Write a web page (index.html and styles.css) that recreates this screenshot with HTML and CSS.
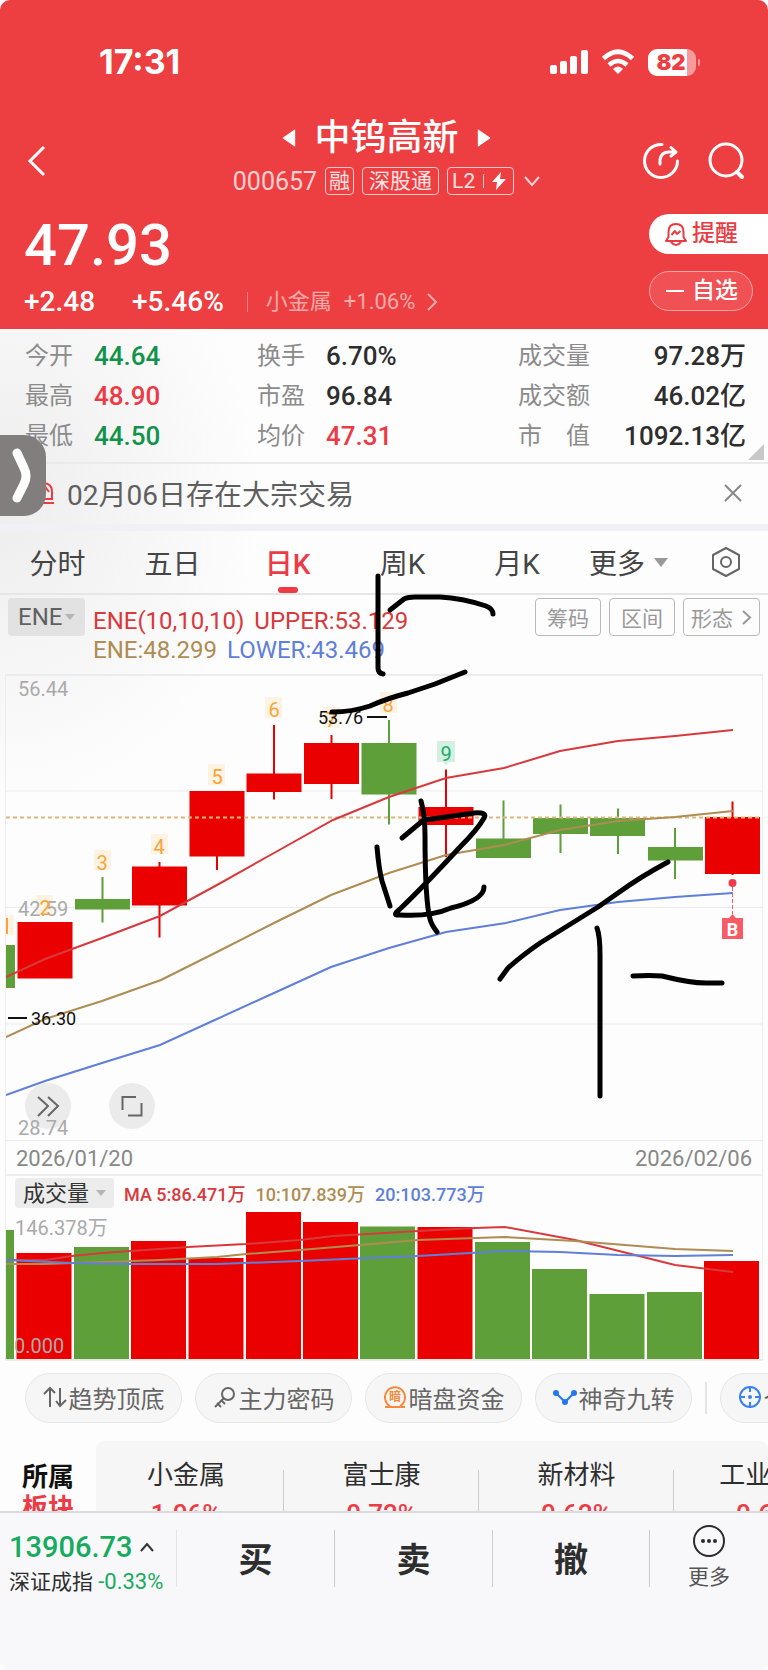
FILE: index.html
```
<!DOCTYPE html>
<html lang="zh-CN">
<head>
    <meta charset="UTF-8">
    <meta name="viewport" content="width=device-width, initial-scale=1.0">
    <title>中钨高新 000657</title>
    <link rel="stylesheet" href="styles.css">
</head>
<body>
    <header class="header">
        <div class="status">
            <span class="clock">17:31</span>
            <div class="status-icons">
                <svg width="38" height="26" viewBox="0 0 38 26" fill="#fff">
                    <rect x="0" y="16" width="7" height="9" rx="2"/>
                    <rect x="10" y="12" width="7" height="13" rx="2"/>
                    <rect x="20" y="7" width="7" height="18" rx="2"/>
                    <rect x="31" y="1" width="7" height="24" rx="2"/>
                </svg>
                <svg width="34" height="26" viewBox="0 0 34 26" fill="none" stroke="#fff" stroke-width="5">
                    <path d="M2.500 9.500 Q17 -4 31.500 9.500"/>
                    <path d="M8 16 Q17 8 26 16" stroke-width="4.500"/>
                    <path d="M17 25 L12 20 Q17 15 22 20 Z" fill="#fff" stroke="none"/>
                </svg>
                <div class="battery"><span>82</span></div>
            </div>
        </div>
        <nav class="nav">
            <button class="icon-button back" aria-label="返回">
                <svg width="20" height="32" viewBox="0 0 20 32"><path d="M17 2 L3 16 L17 30" fill="none" stroke="#fff" stroke-width="3"/></svg>
            </button>
            <div class="stock">
                <div class="stock-name">
                    <button class="icon-button" aria-label="上一只"><svg width="14" height="18" viewBox="0 0 12 16"><path d="M11 1 V15 L1 8 Z" fill="#fff" stroke="#fff" stroke-linejoin="round"/></svg></button>
                    <h1>中钨高新</h1>
                    <button class="icon-button" aria-label="下一只"><svg width="14" height="18" viewBox="0 0 12 16"><path d="M1 1 V15 L11 8 Z" fill="#fff" stroke="#fff" stroke-linejoin="round"/></svg></button>
                </div>
                <div class="stock-tags">
                    <span class="code">000657</span>
                    <span class="tag">融</span>
                    <span class="tag tag-wide">深股通</span>
                    <span class="tag tag-l2">L2<i></i><svg width="14" height="18" viewBox="0 0 14 18"><path d="M9 0 L0 10 H5 L4 18 L14 7 H8 Z" fill="#fff"/></svg></span>
                    <svg class="more-arrow" width="16" height="11" viewBox="0 0 16 11"><path d="M1 1 L8 9 L15 1" fill="none" stroke="#ffd5d5" stroke-width="2"/></svg>
                </div>
            </div>
            <div class="nav-actions">
                <button class="icon-button" aria-label="分享">
                    <svg width="38" height="38" viewBox="0 0 38 38" fill="none" stroke="#fff" stroke-width="3" stroke-linecap="round" stroke-linejoin="round">
                        <path d="M20 2.500 A16.500 16.500 0 1 0 35.500 19"/>
                        <path d="M18 22 V18 Q19 10 27 10 H33 M29 5.500 L34 10 L29 14"/>
                    </svg>
                </button>
                <button class="icon-button" aria-label="搜索">
                    <svg width="38" height="38" viewBox="0 0 38 38" fill="none" stroke="#fff" stroke-width="3" stroke-linecap="round">
                        <circle cx="18" cy="18" r="16"/>
                        <path d="M29 30 L34 35" stroke-width="4"/>
                    </svg>
                </button>
            </div>
        </nav>
        <div class="quote">
            <div>
                <div class="price">47.93</div>
                <div class="change">
                    <span>+2.48</span>
                    <span class="percent">+5.46%</span>
                    <a class="sector" href="#">小金属 <b>+1.06%</b>
                        <svg width="11" height="18" viewBox="0 0 11 18"><path d="M1 1 L9 9 L1 17" fill="none" stroke="#f9aaaa" stroke-width="2"/></svg>
                    </a>
                </div>
            </div>
            <div class="quote-actions">
                <button class="remind">
                    <svg width="22" height="23" viewBox="0 0 22 23" fill="none" stroke="#e93b41" stroke-width="2" stroke-linejoin="round">
                        <path d="M1 18 L3.500 14 V9 Q3.500 1 11 1 Q18.500 1 18.500 9 V14 L21 18 Z"/>
                        <path d="M6 19 Q11 25 16 19 M6.500 12 L10 8 L12 11 L15.500 8"/>
                    </svg>
                    提醒
                </button>
                <button class="watch"><i></i>自选</button>
            </div>
        </div>
    </header>

    <section class="info">
        <dl class="stats">
            <div><dt>今开</dt><dd class="green">44.64</dd></div>
            <div><dt>换手</dt><dd>6.70%</dd></div>
            <div><dt>成交量</dt><dd>97.28万</dd></div>
            <div><dt>最高</dt><dd class="red">48.90</dd></div>
            <div><dt>市盈</dt><dd>96.84</dd></div>
            <div><dt>成交额</dt><dd>46.02亿</dd></div>
            <div><dt>最低</dt><dd class="green">44.50</dd></div>
            <div><dt>均价</dt><dd class="red">47.31</dd></div>
            <div><dt>市　值</dt><dd>1092.13亿</dd></div>
        </dl>
        <div class="notice">
            <svg width="26" height="26" viewBox="0 0 26 26" fill="none" stroke="#e93b41" stroke-width="2">
                <path d="M4 19 V12 Q4 3 13 3 Q22 3 22 12 V19 Z M2 23 H24 M12 13 L16 8 L19 12"/>
            </svg>
            <p>02月06日存在大宗交易</p>
            <button class="icon-button" aria-label="关闭">
                <svg width="18" height="18" viewBox="0 0 18 18"><path d="M1 1 L17 17 M17 1 L1 17" stroke="#888" stroke-width="2"/></svg>
            </button>
        </div>
        <button class="handle" aria-label="展开侧栏">
            <svg width="22" height="56" viewBox="0 0 22 56"><path d="M5 5 L12 20 Q16 28 12 36 L5 50" fill="none" stroke="#fff" stroke-width="9" stroke-linecap="round"/></svg>
        </button>
    </section>

    <main class="kline">
        <div class="tabs">
            <button>分时</button>
            <button>五日</button>
            <button class="active">日K</button>
            <button>周K</button>
            <button>月K</button>
            <button>更多<i class="caret"></i></button>
            <button aria-label="设置">
                <svg width="30" height="32" viewBox="0 0 30 32" fill="none" stroke="#666" stroke-width="2" stroke-linejoin="round">
                    <path d="M15 2 L28 9 V23 L15 30 L2 23 V9 Z"/>
                    <circle cx="15" cy="16" r="5"/>
                </svg>
            </button>
        </div>
        <div class="indicator">
            <label class="picker picker-ene">
                <select aria-label="主图指标"><option>ENE</option></select>
                <i class="caret"></i>
            </label>
            <div class="legend">
                <p><span class="c-red">ENE(10,10,10)</span><span class="c-red">UPPER:53.129</span></p>
                <p><span class="c-brown">ENE:48.299</span><span class="c-blue">LOWER:43.469</span></p>
            </div>
            <div class="tools">
                <button>筹码</button>
                <button>区间</button>
                <button>形态
                    <svg width="10" height="15" viewBox="0 0 10 15"><path d="M1 1 L8 7.500 L1 14" fill="none" stroke="#999" stroke-width="2"/></svg>
                </button>
            </div>
        </div>

        <div class="plots">
            <svg class="plot" viewBox="6 675 756 466">
                <g stroke="#ececec">
                    <path d="M6 675.500 H762 M6 791 H762 M6 907.500 H762 M6 1024 H762 M6 1140.500 H762"/>
                </g>
                <!-- candles -->
                <g fill="#eb0000" stroke="#eb0000" stroke-width="0">
                    <rect x="17.500" y="922" width="55" height="56.500"/>
                    <rect x="132" y="866.500" width="55" height="39"/>
                    <rect x="189.500" y="791" width="55" height="65.500"/>
                    <rect x="246.500" y="773.500" width="55" height="18.500"/>
                    <rect x="304" y="743" width="55" height="41"/>
                    <rect x="418.500" y="807" width="55" height="18"/>
                    <rect x="705" y="817" width="55" height="57"/>
                    <path stroke-width="2" d="M159.500 862 V937.500 M217 856 V870 M274 725 V799.500 M331.500 735 V799 M446 769.500 V857 M732.500 801.500 V875"/>
                </g>
                <g fill="#5f9f3a" stroke="#5f9f3a" stroke-width="0">
                    <rect x="6" y="945" width="9" height="43"/>
                    <rect x="75" y="899" width="55" height="10.500"/>
                    <rect x="361.500" y="743" width="55" height="51.500"/>
                    <rect x="476" y="838.500" width="55" height="19.500"/>
                    <rect x="533" y="818" width="55" height="16"/>
                    <rect x="590" y="818" width="55" height="18"/>
                    <rect x="648" y="847" width="55" height="13.500"/>
                    <path stroke-width="2" d="M102.500 877 V922.500 M389 720 V824.500 M503.500 800.500 V858 M560.500 804.500 V853 M618 808.500 V854 M675 828 V879"/>
                </g>
                <path d="M6 817.500 H762" stroke="#dcb77c" stroke-width="2" stroke-dasharray="4 3"/>
                <!-- day counters -->
                <g fill="#fdf3e3">
                    <rect x="6" y="915" width="8" height="20"/>
                    <rect x="36" y="895" width="17" height="20"/>
                    <rect x="94" y="850" width="17" height="20"/>
                    <rect x="151" y="834" width="17" height="20"/>
                    <rect x="208" y="764" width="17" height="21"/>
                    <rect x="265" y="697" width="17" height="21"/>
                    <rect x="323" y="707" width="17" height="21"/>
                    <rect x="380" y="692" width="17" height="21"/>
                </g>
                <path d="M437 741 H455 V762 H449 L446 765 L443 762 H437 Z" fill="#d3f0e1"/>
                <g class="axis">
                    <text x="18" y="696">56.44</text>
                    <text x="18" y="916">42.59</text>
                </g>
                <g class="count">
                    <path d="M7 918 V934" stroke="#f9a33a" stroke-width="2"/>
                    <text x="45" y="915">2</text>
                    <text x="102" y="870">3</text>
                    <text x="159" y="854">4</text>
                    <text x="217" y="784">5</text>
                    <text x="274" y="717">6</text>
                    <text x="331" y="727">7</text>
                    <text x="388" y="712">8</text>
                    <text x="446" y="761" class="nine">9</text>
                </g>
                <g fill="none" stroke-width="2">
                    <polyline stroke="#d8393c" points="6,977 45,959 102,938 160,916 217,885 274,853 333,820 389,797 446,778 504,768 560,751 618,741 675,736 733,730"/>
                    <polyline stroke="#ae8c52" points="6,1037 45,1019 102,1001 161,980 217,952 274,923 331,895 389,873 446,855 504,845 560,830 618,821 675,817 733,811"/>
                    <polyline stroke="#5f7fd8" points="6,1095 45,1081 102,1063 160,1045 217,1019 274,993 331,967 389,948 446,932 506,923 560,910 618,902 675,897 733,893"/>
                </g>
                <g class="mark">
                    <path d="M367 717 H387 M8 1018 H27" stroke="#111" stroke-width="2"/>
                    <text x="318" y="724">53.76</text>
                    <text x="31" y="1025">36.30</text>
                </g>
                <!-- buy point -->
                <path d="M732.500 887 V914" stroke="#f65b66" stroke-width="1" stroke-dasharray="4 2"/>
                <circle cx="732.500" cy="883" r="4" fill="#f33a48"/>
                <path d="M722 918 H729 L732.500 914 L736 918 H743 V939 H722 Z" fill="#f65b66"/>
                <text x="732.500" y="936" class="buy">B</text>
                <g fill="#ebebeb">
                    <circle cx="48" cy="1106" r="23"/>
                    <circle cx="132" cy="1106" r="23"/>
                </g>
                <g fill="none" stroke="#666" stroke-width="2">
                    <path d="M38 1097 L48 1106 L38 1116 M48 1097 L58 1106 L48 1116"/>
                    <path d="M122.500 1110 V1097 H136 M128 1115.500 H141.500 V1103"/>
                </g>
                <text class="axis" x="18" y="1135">28.74</text>
            </svg>
            <div class="dates">
                <span>2026/01/20</span>
                <span>2026/02/06</span>
            </div>
            <div class="volume-head">
                <label class="picker">
                    <select aria-label="副图指标"><option>成交量</option></select>
                    <i class="caret"></i>
                </label>
                <span class="c-red">MA 5:86.471万</span>
                <span class="c-brown">10:107.839万</span>
                <span class="c-blue">20:103.773万</span>
            </div>
            <svg class="plot" viewBox="6 1210 756 150">
                <text class="axis" x="15" y="1235">146.378万</text>
                <g fill="#eb0000">
                    <rect x="16.500" y="1253" width="55" height="106"/>
                    <rect x="131" y="1241" width="55" height="118"/>
                    <rect x="188.500" y="1258" width="55" height="101"/>
                    <rect x="246" y="1212" width="55" height="147"/>
                    <rect x="303" y="1222" width="55" height="137"/>
                    <rect x="417.500" y="1227" width="55" height="132"/>
                    <rect x="704" y="1261" width="55" height="98"/>
                </g>
                <g fill="#5f9f3a">
                    <rect x="6" y="1230" width="8" height="129"/>
                    <rect x="74" y="1247" width="55" height="112"/>
                    <rect x="360" y="1226.500" width="55" height="132.500"/>
                    <rect x="475" y="1242" width="55" height="117"/>
                    <rect x="532" y="1269" width="55" height="90"/>
                    <rect x="589.500" y="1294" width="55" height="65"/>
                    <rect x="647" y="1292" width="55" height="67"/>
                </g>
                <path d="M6 1359.500 H762" stroke="#e6e6e6"/>
                <g fill="none" stroke-width="2">
                    <polyline stroke="#d8393c" points="6,1260 45,1260 72,1256 102,1253 131,1251 188,1247 246,1244 300,1240 333,1236 368,1234 418,1231 475,1228 505,1227 575,1240 675,1265 733,1272"/>
                    <polyline stroke="#ae8c52" points="6,1264 45,1264 102,1262 160,1260 217,1257 246,1254 300,1250 360,1245 418,1240 505,1237 575,1241 675,1249 733,1251"/>
                    <polyline stroke="#5f7fd8" points="6,1260 72,1263 131,1264 217,1264 300,1261 368,1258 418,1256 505,1251 560,1252 618,1255 675,1256 733,1255"/>
                </g>
                <text class="axis" x="14" y="1353">0.000</text>
            </svg>
        </div>

        <!-- hand-drawn notes over the chart -->
        <svg class="ink" viewBox="0 531 768 829" fill="none" stroke="#000" stroke-width="5" stroke-linecap="round" stroke-linejoin="round">
            <path d="M378 576 V668 Q378 673 383 674"/>
            <path d="M390 610 L404 599 Q408 597 415 597 H440 Q462 598 486 606 Q493 609 493 614"/>
            <path d="M332 712 Q352 712 370 706 Q388 698 408 693 L435 684 L465 672"/>
            <path d="M377 847 Q379 870 382 881 L390 906"/>
            <path d="M402 838 L420 823 Q424 819 432 819 L474 813 Q488 812 484 818 Q478 829 460 847 Q425 885 400 909 Q391 916 400 915 Q430 917 451 908 Q484 900 484 887"/>
            <path d="M421 801 Q425 815 425 835 Q425 900 430 919 Q431 924 437 932"/>
            <path d="M668 862 Q640 877 618 893 L598 907 L540 943 Q520 957 508 968 L500 979"/>
            <path d="M597 928 Q600 936 600 955 V1096"/>
            <path d="M633 976 Q650 975 662 976 Q690 983 706 983 H722"/>
        </svg>
    </main>

    <div class="pills">
        <button>
            <svg width="24" height="24" viewBox="0 0 24 24" fill="none" stroke="#666" stroke-width="2"><path d="M7 22 V4 M1 9 L7 3 L12 8 M17 3 V21 M13 16 L17 21 L23 15"/></svg>趋势顶底
        </button>
        <button>
            <svg width="24" height="24" viewBox="0 0 24 24" fill="none" stroke="#666" stroke-width="2"><circle cx="15" cy="9" r="6"/><path d="M11 13 L2 22 M4 18 L8 22 M8 15 L12 19"/></svg>主力密码
        </button>
        <button>
            <svg width="24" height="24" viewBox="0 0 24 24" fill="none" stroke="#f58a3c" stroke-width="2"><path d="M7 21 A10 10 0 1 1 17 21 M2 22 H22"/><text x="12" y="16" class="coin">暗</text></svg>暗盘资金
        </button>
        <button>
            <svg width="24" height="24" viewBox="0 0 24 24" fill="#2277f5"><path d="M3 8 L12 17 L21 8" fill="none" stroke="#2277f5" stroke-width="2"/><circle cx="3" cy="8" r="3"/><circle cx="21" cy="8" r="3"/><circle cx="12" cy="17" r="3"/></svg>神奇九转
        </button>
        <i></i>
        <button>
            <svg width="24" height="24" viewBox="0 0 24 24" fill="none" stroke="#3b82f0" stroke-width="2"><circle cx="12" cy="12" r="10"/><path d="M12 1 V7 M12 17 V23 M1 12 H7 M17 12 H23"/><circle cx="12" cy="12" r="1"/></svg>个股诊断
        </button>
    </div>

    <section class="boards">
        <h2>所属<br><em>板块</em></h2>
        <div class="board-list">
            <a href="#">小金属<b>1.06%</b></a>
            <a href="#">富士康<b>0.72%</b></a>
            <a href="#">新材料<b>0.62%</b></a>
            <a href="#">工业互联<b>0.60%</b></a>
        </div>
    </section>

    <footer class="footer">
        <a class="index" href="#">
            <span class="index-value">13906.73<svg width="14" height="10" viewBox="0 0 14 10"><path d="M1 9 L7 2 L13 9" fill="none" stroke="#333" stroke-width="2"/></svg></span>
            <span class="index-name">深证成指 <b>-0.33%</b></span>
        </a>
        <button class="trade">买</button>
        <button class="trade">卖</button>
        <button class="trade">撤</button>
        <button class="menu">
            <svg width="34" height="34" viewBox="0 0 34 34"><circle cx="17" cy="17" r="15" fill="none" stroke="#2b2b2b" stroke-width="2"/><g fill="#2b2b2b"><circle cx="11" cy="17" r="2"/><circle cx="17" cy="17" r="2"/><circle cx="23" cy="17" r="2"/></g></svg>
            更多
        </button>
    </footer>
</body>
</html>
```
FILE: styles.css
```
* {
    box-sizing: border-box;
}
body {
    margin: 0;
    font-family: Roboto, "Noto Sans CJK SC", sans-serif;
    color: #2e2e2e;
    background: #fdfdfd radial-gradient(ellipse 260px 300px at 0 500px, #ededed, #fdfdfd) no-repeat;
    overflow-x: hidden;
}
button {
    font: inherit;
    color: inherit;
    background: none;
    border: none;
    padding: 0;
    white-space: nowrap;
}
a {
    color: inherit;
    text-decoration: none;
}
svg {
    display: block;
    flex: none;
}
p, h1, h2, dl, dd {
    margin: 0;
}
.icon-button {
    display: flex;
}
.caret {
    border: 7px solid transparent;
    border-top: 9px solid #999;
    border-bottom: none;
}
.red { color: #ee3a45; }
.green { color: #12934c; }
.c-red { color: #d8393c; }
.c-brown { color: #ae8c52; }
.c-blue { color: #5f7fd8; }

/* header */
.header {
    background: #ed3f41;
    color: #fff;
    padding-top: 44px;
    height: 329px;
    border-radius: 10px 10px 0 0;
}
.status {
    display: flex;
    justify-content: space-between;
    align-items: center;
    height: 36px;
    padding: 0 72px 0 99px;
}
.clock {
    font: bold 34px/36px Inter, sans-serif;
}
.status-icons {
    display: flex;
    align-items: center;
    gap: 13px;
}
.battery {
    position: relative;
    width: 48px;
    height: 27px;
    border-radius: 9px;
    background: linear-gradient(to right, #fff 39px, #f79a9b 39px);
    color: #ed3f41;
    text-align: center;
    font: 900 22px/27px Inter, sans-serif;
}
.battery span {
    margin-right: 2px;
}
.battery::after {
    content: "";
    position: absolute;
    right: -4px;
    top: 10px;
    width: 2px;
    height: 7px;
    border-radius: 2px;
    background: #f79a9b;
}
.nav {
    display: grid;
    grid-template-columns: 1fr auto 1fr;
    align-items: center;
    height: 90px;
    margin-top: 36px;
    padding: 0 22px 0 27px;
}
.stock-name {
    display: flex;
    justify-content: center;
    align-items: center;
    gap: 18px;
    height: 40px;
}
.stock-name h1 {
    font-size: 36px;
    font-weight: 500;
    line-height: 40px;
}
.stock-tags {
    display: flex;
    align-items: center;
    gap: 8px;
    height: 46px;
    color: #ffe3e3;
}
.code {
    font-size: 25px;
    color: #ffd0d0;
}
.tag {
    height: 28px;
    padding: 0 3px;
    border: 1px solid #ffc9c9;
    border-radius: 4px;
    font-size: 21px;
    line-height: 26px;
}
.tag-wide {
    padding: 0 6px;
}
.tag-l2 {
    display: flex;
    align-items: center;
    gap: 8px;
    padding: 0 7px 0 4px;
}
.tag-l2 i {
    width: 1px;
    height: 14px;
    background: #ffc9c9;
}
.more-arrow {
    margin-left: 2px;
}
.nav-actions {
    display: flex;
    justify-content: flex-end;
    gap: 28px;
}
.quote {
    display: flex;
    justify-content: space-between;
}
.price {
    padding-left: 24px;
    font-size: 58px;
    font-weight: 500;
    line-height: 78px;
}
.change {
    display: flex;
    align-items: center;
    padding-left: 24px;
    font-size: 28px;
    font-weight: 500;
    line-height: 36px;
}
.percent {
    margin-left: 37px;
}
.sector {
    display: flex;
    align-items: center;
    gap: 12px;
    margin-left: 23px;
    padding-left: 18px;
    border-left: 1px solid #f58083;
    color: #f9aaaa;
    font-size: 22px;
    font-weight: 400;
    line-height: 20px;
}
.sector b {
    font-weight: 400;
}
.quote-actions {
    display: flex;
    flex-direction: column;
    gap: 17px;
    width: 119px;
    padding-top: 8px;
}
.remind, .watch {
    display: flex;
    align-items: center;
    height: 40px;
    font-size: 23px;
    line-height: 38px;
    font-weight: 500;
}
.remind {
    gap: 5px;
    padding-left: 16px;
    border-radius: 20px 0 0 20px;
    background: #fff;
    color: #e93b41;
}
.watch {
    gap: 8px;
    width: 104px;
    padding-left: 16px;
    border: 1px solid #f9a5a6;
    border-radius: 20px;
    background: #f05154;
}
.watch i {
    width: 18px;
    height: 2px;
    background: #fff;
}

/* figures and notice */
.info {
    position: relative;
}
.stats {
    display: grid;
    grid-template-columns: 232fr 261fr 228fr;
    padding: 7px 22px 6px 25px;
    border-bottom: 2px solid #eaeaea;
}
.stats div {
    display: flex;
    align-items: center;
    height: 40px;
}
.stats dt {
    min-width: 69px;
    font-size: 24px;
    color: #8b8b8b;
    line-height: 36px;
}
.stats dd {
    font-size: 26px;
    font-weight: 500;
    line-height: 36px;
}
.stats div:nth-child(3n) {
    justify-content: space-between;
}
.stats::after {
    content: "";
    position: absolute;
    right: 4px;
    top: 115px;
    border: 8px solid #c8c8c8;
    border-top-color: transparent;
    border-left-color: transparent;
}
.notice {
    display: flex;
    align-items: center;
    gap: 11px;
    height: 67px;
    border-bottom: 7px solid #f0f0f6;
    padding: 0 26px 2px 30px;
}
.notice p {
    flex: 1;
    font-size: 28px;
    color: #5f5f5f;
}
.handle {
    position: absolute;
    left: 0;
    top: 106px;
    width: 46px;
    height: 81px;
    padding-left: 12px;
    border-radius: 0 22px 22px 0;
    background: #827e7d;
}

/* k-line area */
.kline {
    position: relative;
}
.tabs {
    display: grid;
    grid-template-columns: 115fr 115fr 115fr 115fr 114fr 109fr 85fr;
    height: 64px;
    border-bottom: 2px solid #e6e6e6;
}
.tabs button {
    display: flex;
    align-items: center;
    justify-content: center;
    gap: 9px;
    position: relative;
    font-size: 28px;
    color: #454545;
}
.tabs .active {
    color: #ee3a45;
    font-weight: 500;
}
.tabs .active::after {
    content: "";
    position: absolute;
    bottom: 0;
    width: 20px;
    height: 6px;
    border-radius: 3px;
    background: #ee3a45;
}
.indicator {
    display: flex;
    align-items: flex-start;
    height: 80px;
    padding: 3px 8px 0 8px;
}
.picker {
    display: flex;
    align-items: center;
    gap: 6px;
    height: 30px;
    padding: 0 8px;
    border-radius: 4px;
    background: #ececec;
}
.picker select {
    appearance: none;
    border: none;
    background: none;
    padding: 0;
    font: inherit;
    font-size: 22px;
    color: #333;
}
.picker .caret {
    border-width: 6px 5px 0;
    border-top-color: #b5b5b5;
}
.picker-ene {
    gap: 2px;
    height: 38px;
    padding: 0 10px;
    background: #e2e2e2;
}
.picker-ene select {
    font-size: 24px;
    color: #606060;
}
.legend {
    flex: 1;
    padding: 9px 0 0 8px;
    font-size: 24px;
    line-height: 29px;
    white-space: nowrap;
}
.legend span {
    margin-right: 10px;
}
.tools {
    display: flex;
    gap: 8px;
}
.tools button {
    display: flex;
    align-items: center;
    gap: 9px;
    height: 38px;
    padding: 0 11px;
    border: 1px solid #b9b9b9;
    border-radius: 4px;
    font-size: 21px;
    color: #999;
}
.tools button:last-child {
    padding: 0 7px;
}
.plots {
    margin: 0 6px;
    box-shadow: 0 0 0 1px #ececec;
}
.plot {
    width: 100%;
    height: auto;
}
.axis {
    font-size: 20px;
    fill: #aaa;
}
.count {
    font-size: 20px;
    fill: #f9a33a;
    text-anchor: middle;
}
.count .nine {
    fill: #22ad6b;
}
.mark {
    font-size: 18px;
    fill: #111;
}
.buy {
    font-size: 18px;
    font-weight: bold;
    fill: #fff;
    text-anchor: middle;
}
.dates {
    display: flex;
    justify-content: space-between;
    height: 35px;
    padding: 0 10px;
    border-bottom: 2px solid #eee;
    font-size: 22px;
    line-height: 35px;
    color: #888;
}
.volume-head {
    display: flex;
    align-items: center;
    gap: 10px;
    height: 34px;
    padding-left: 9px;
    font-size: 18px;
    font-weight: 500;
    white-space: nowrap;
}
.volume-head .picker {
    font-weight: 400;
}
.ink {
    position: absolute;
    left: 0;
    top: 0;
    width: 100%;
    height: auto;
    pointer-events: none;
}

/* shortcuts */
.pills {
    display: flex;
    align-items: center;
    gap: 13px;
    padding: 13px 0 18px 25px;
    overflow: hidden;
}
.pills button {
    display: flex;
    flex: none;
    align-items: center;
    justify-content: center;
    gap: 2px;
    width: 157px;
    height: 50px;
    padding-bottom: 2px;
    border: 1px solid #e6e6e6;
    border-radius: 25px;
    background: #f6f6f6;
    font-size: 24px;
    color: #666;
}
.pills i {
    flex: none;
    width: 2px;
    height: 32px;
    background: #e3e3e3;
}
.coin {
    font-size: 12px;
    font-weight: bold;
    fill: #f58a3c;
    stroke: none;
    text-anchor: middle;
}

/* related boards, cut off by the footer */
.boards {
    display: flex;
    height: 70px;
    overflow: hidden;
}
.boards h2 {
    flex: none;
    width: 96px;
    padding-top: 21px;
    text-align: center;
    font-size: 26px;
    line-height: 31px;
    color: #111;
}
.boards em {
    font-style: normal;
    color: #ee3a45;
}
.board-list {
    display: flex;
    flex: 1;
    height: 120px;
    border-radius: 8px 8px 0 0;
    background: #f6f6f6;
    overflow: hidden;
}
.board-list a {
    position: relative;
    flex: 0 0 29%;
    padding-top: 15px;
    text-align: center;
    font-size: 26px;
    line-height: 38px;
    white-space: nowrap;
}
.board-list a:first-child {
    flex-basis: 28%;
    padding-right: 8px;
}
.board-list a::after {
    content: "";
    position: absolute;
    right: 0;
    top: 29px;
    width: 1px;
    height: 60px;
    background: #ccc;
}
.board-list b {
    display: block;
    line-height: 40px;
    font-weight: 500;
    color: #ee3a45;
}

/* footer */
.footer {
    display: grid;
    grid-template-columns: 177fr 158fr 158fr 157fr 118fr;
    height: 159px;
    padding-top: 17px;
    align-items: start;
    border-top: 2px solid #dcdce0;
    border-radius: 0 0 10px 10px;
    background: #f8f8fb;
}
.index, .trade {
    height: 57px;
    border-right: 1px solid #ccc;
}
.index {
    padding-left: 9px;
    border-color: #e4e4e4;
    white-space: nowrap;
}
.index-value {
    display: flex;
    align-items: center;
    gap: 8px;
    font-size: 29px;
    line-height: 34px;
    color: #17ab5e;
    font-weight: 500;
}
.index-name {
    display: block;
    font-size: 21px;
    line-height: 36px;
}
.index-name b {
    font-size: 22px;
    font-weight: 400;
    color: #17ab5e;
}
.trade {
    padding-bottom: 2px;
    font-size: 34px;
    font-weight: bold;
}
.menu {
    display: flex;
    flex-direction: column;
    align-items: center;
    gap: 4px;
    font-size: 21px;
    line-height: 30px;
    color: #555;
}
.menu svg {
    margin-top: -6px;
}
```
